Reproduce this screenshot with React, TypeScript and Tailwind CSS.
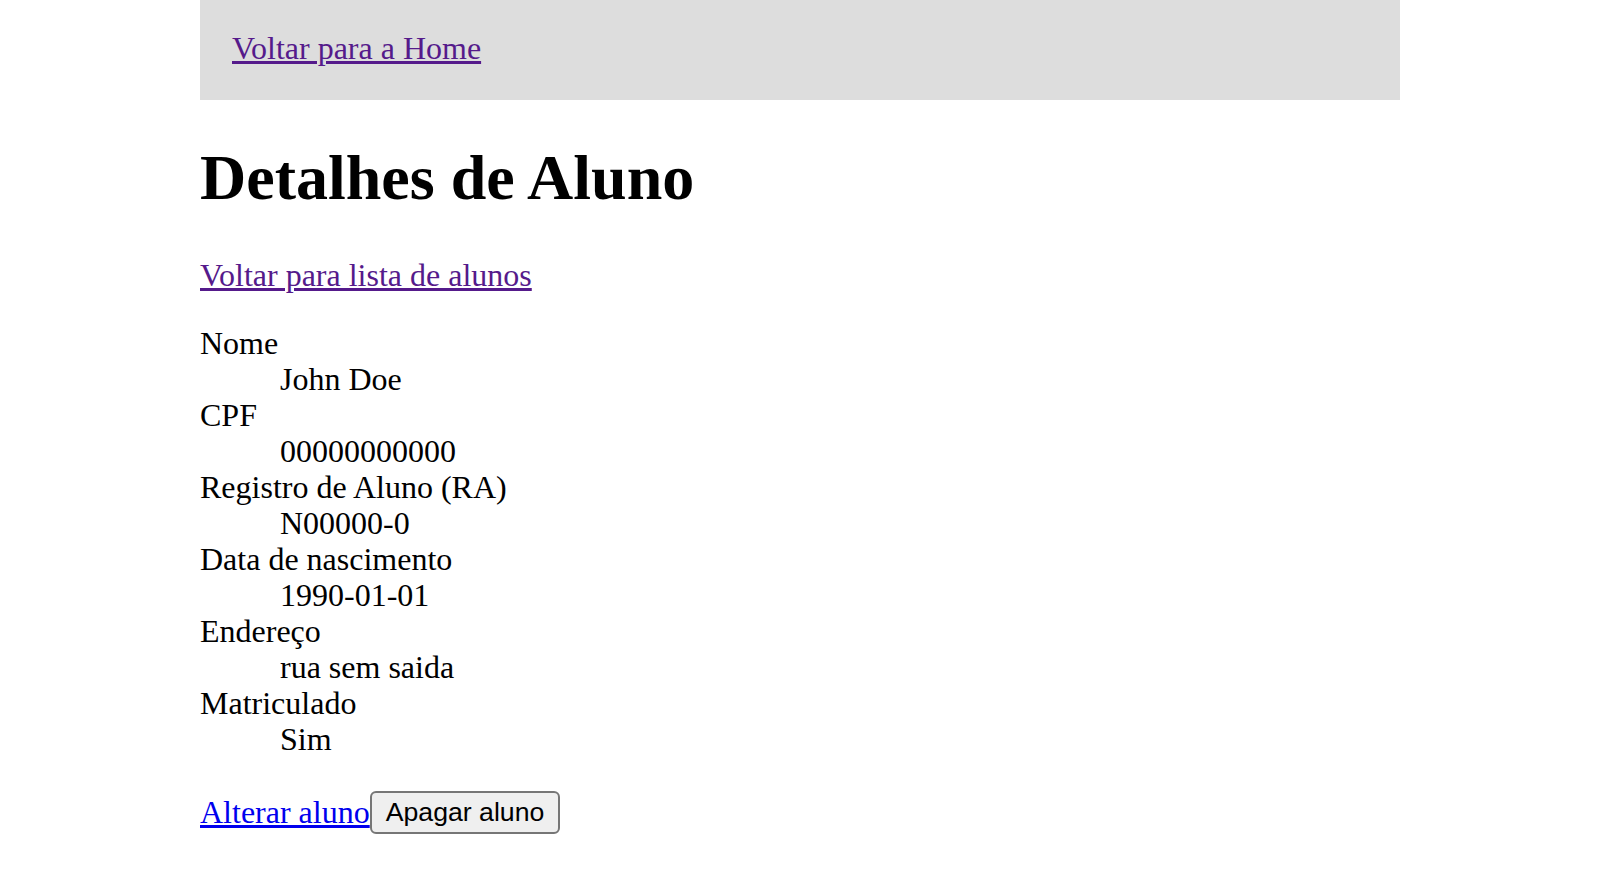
export default function App() {
  const fields = [
    { label: "Nome", value: "John Doe" },
    { label: "CPF", value: "00000000000" },
    { label: "Registro de Aluno (RA)", value: "N00000-0" },
    { label: "Data de nascimento", value: "1990-01-01" },
    { label: "Endereço", value: "rua sem saida" },
    { label: "Matriculado", value: "Sim" },
  ];

  return (
    <div className="min-h-screen bg-white text-black font-['Liberation_Serif',serif] text-[32px] leading-[36px]">
      <div className="w-[1200px] mx-auto">
        {/* Header */}
        <nav className="bg-[#dddddd] px-[32px] pt-[30px] pb-[34px]">
          <a href="#" className="text-[#551a8b] underline">
            Voltar para a Home
          </a>
        </nav>

        <h1 className="text-[64px] leading-[74px] font-bold mt-[41px] mb-[42px]">Detalhes de Aluno</h1>

        <p className="mb-[32px]">
          <a href="#" className="text-[#551a8b] underline">
            Voltar para lista de alunos
          </a>
        </p>

        <dl className="mb-[34px]">
          {fields.map((f) => (
            <div key={f.label}>
              <dt>{f.label}</dt>
              <dd className="ml-[80px]">{f.value}</dd>
            </div>
          ))}
        </dl>

        <div className="flex items-baseline">
          <a href="#" className="text-[#0000ee] underline relative top-[2px]">
            Alterar aluno
          </a>
          <button className="font-['Liberation_Sans',sans-serif] text-[26.67px] leading-[31px] text-black bg-[#efefef] border-2 border-[#767676] rounded-[6px] px-[14px] py-[4px]">
            Apagar aluno
          </button>
        </div>
      </div>
    </div>
  );
}
